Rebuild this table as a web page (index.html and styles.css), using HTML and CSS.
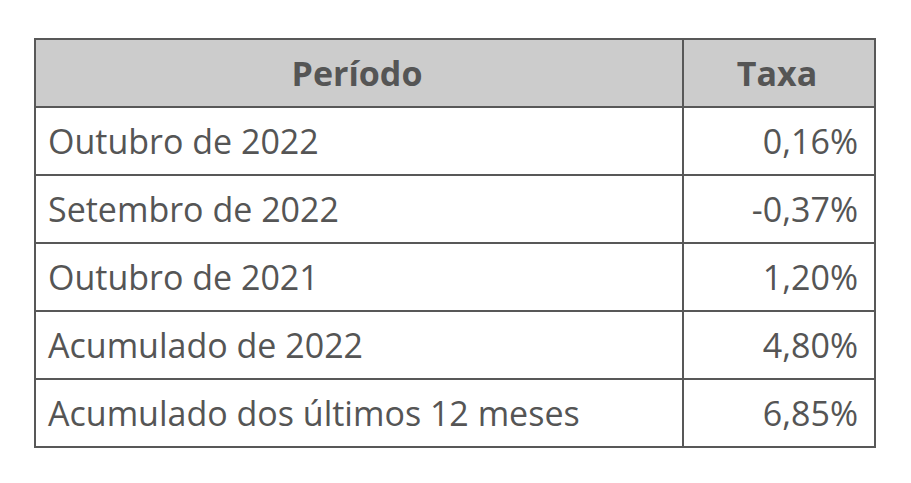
FILE: index.html
```html
<!DOCTYPE html>
<html lang="pt-BR">
<head>
<meta charset="utf-8">
<title>Taxas</title>
<link rel="stylesheet" href="styles.css">
</head>
<body>
<div class="wrap">
<table class="rates">
  <thead>
    <tr><th class="col-period">Período</th><th class="col-rate">Taxa</th></tr>
  </thead>
  <tbody>
    <tr><td>Outubro de 2022</td><td class="num">0,16%</td></tr>
    <tr><td>Setembro de 2022</td><td class="num">-0,37%</td></tr>
    <tr><td>Outubro de 2021</td><td class="num">1,20%</td></tr>
    <tr><td>Acumulado de 2022</td><td class="num">4,80%</td></tr>
    <tr><td>Acumulado dos últimos 12 meses</td><td class="num">6,85%</td></tr>
  </tbody>
</table>
</div>
</body>
</html>
```

FILE: styles.css
```css
html, body {
  margin: 0;
  padding: 0;
  background: #fff;
}
.wrap {
  padding: 38px 0 0 34px;
}
.rates {
  border-collapse: collapse;
  width: 842px;
  font-family: "Open Sans", "Noto Sans", sans-serif;
  font-size: 34px;
  color: #555;
}
.rates th, .rates td {
  border: 2px solid #585858;
  height: 68px;
  padding: 0 16px 0 12px;
  box-sizing: border-box;
}
.rates th {
  background: #cccccc;
  font-weight: 700;
  color: #555;
  text-align: center;
}
.col-rate {
  width: 192px;
}
.num {
  text-align: right;
}
```
